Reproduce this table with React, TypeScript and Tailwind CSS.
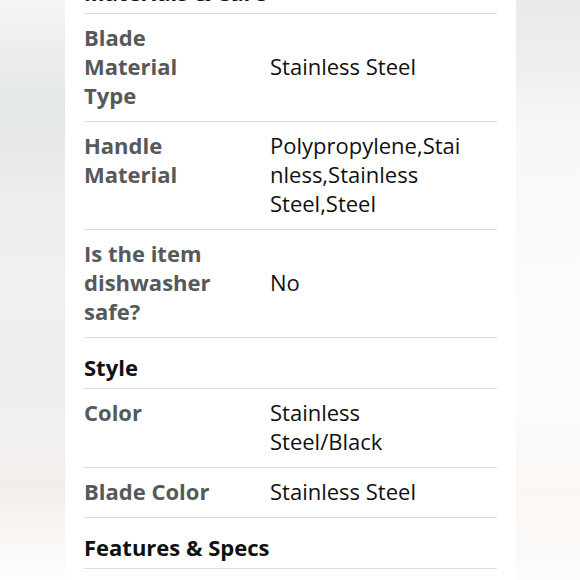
import React from 'react';

type Row =
  | { kind: 'header'; title: string }
  | { kind: 'item'; label: string; value: string };

const rows: Row[] = [
  { kind: 'header', title: 'Materials & Care' },
  { kind: 'item', label: 'Blade Material Type', value: 'Stainless Steel' },
  { kind: 'item', label: 'Handle Material', value: 'Polypropylene,Stainless,Stainless Steel,Steel' },
  { kind: 'item', label: 'Is the item dishwasher safe?', value: 'No' },
  { kind: 'header', title: 'Style' },
  { kind: 'item', label: 'Color', value: 'Stainless Steel/Black' },
  { kind: 'item', label: 'Blade Color', value: 'Stainless Steel' },
  { kind: 'header', title: 'Features & Specs' },
];

const App: React.FC = () => {
  return (
    <div className="w-[580px] h-[580px] overflow-hidden flex bg-[#f2f2f2] font-['Open_Sans',sans-serif]">
      {/* blurred photo on the left */}
      <div className="w-[65px] shrink-0 bg-[linear-gradient(180deg,#f4f5f4_0%,#e4e7e7_18%,#eceded_35%,#f1f1f1_50%,#ededee_65%,#f2f1f1_74%,#f4eeeb_84%,#faf7f5_93%,#fdfdfd_100%)]" />

      {/* the spec card */}
      <div className="w-[451px] shrink-0 bg-white px-[19px]">
        <div className="mt-[-37px] flex flex-col">
          {rows.map((row, i) =>
            row.kind === 'header' ? (
              <div
                key={i}
                className="border-b border-[#dcdede] pt-[15px] pb-[6px] text-[22px] leading-[29px] font-bold text-[#0f1111]"
              >
                {row.title}
              </div>
            ) : (
              <div
                key={i}
                className="flex border-b border-[#dcdede] pt-[9px] pb-[11px] text-[22px] leading-[29px]"
              >
                <div className="w-[186px] shrink-0 pr-[44px] font-bold text-[#565959]">{row.label}</div>
                <div className="w-[200px] flex items-center text-[#0f1111] [overflow-wrap:anywhere]">
                  <span className="w-full">{row.value}</span>
                </div>
              </div>
            )
          )}
        </div>
      </div>

      {/* blurred photo on the right */}
      <div className="flex-1 bg-[linear-gradient(180deg,#e8e9eb_0%,#eeeff0_12%,#f7f7f7_22%,#fafafa_40%,#fbfbfb_70%,#fbf7f4_85%,#fcfbfa_100%)]" />
    </div>
  );
};

export default App;
